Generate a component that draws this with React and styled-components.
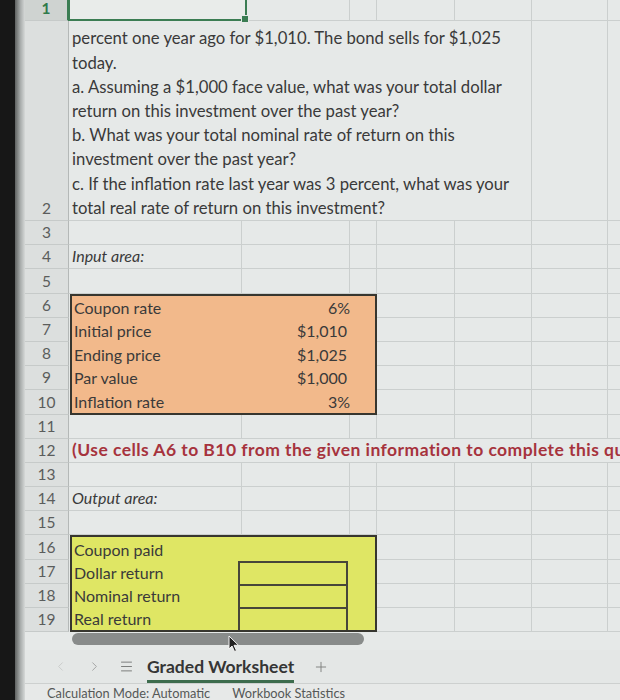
import React from 'react';
import styled, { createGlobalStyle, css } from 'styled-components';
import { ChevronLeft, ChevronRight, Menu, Plus } from 'lucide-react';

const ROW_H = 24.2;
const GRID = '#cbcfce';
const INK = '#3a3a3a';

const Global = createGlobalStyle`
  html, body { margin: 0; padding: 0; width: 620px; height: 700px; overflow: hidden; background: #e6e9e8; }
  body { font-family: Lato, "Open Sans", "Liberation Sans", sans-serif; }
  #root { width: 620px; height: 700px; }
`;

const Screen = styled.div`
  display: flex;
  width: 620px;
  height: 700px;
  overflow: hidden;
`;

const DarkEdge = styled.div`
  flex: none;
  width: 15px;
  background: #171717;
`;

const Bezel = styled.div`
  flex: none;
  width: 10px;
  background: linear-gradient(to right, #5e6160, #a9adac 55%, #d6d9d8);
`;

const Main = styled.div`
  flex: 1;
  min-width: 0;
  display: flex;
  flex-direction: column;
  overflow: hidden;
  position: relative;
`;

const Sheet = styled.div`
  display: grid;
  grid-template-columns: 44px 173px 108px 27px 78px 77px 76px 80px;
  grid-template-rows: 21px 200px repeat(17, ${ROW_H}px);
  background: #e6e9e8;
  width: 663px;
`;

const RowHead = styled.div`
  grid-column: 1;
  grid-row: ${(p) => p.$row};
  display: flex;
  align-items: flex-end;
  justify-content: center;
  padding-bottom: 2px;
  background: #dcdfde;
  border-bottom: 1px solid #c6cac9;
  border-right: 1px solid #b4b8b7;
  font-size: 15.5px;
  line-height: 20px;
  color: #5b5d5c;
  ${(p) =>
    p.$selected &&
    css`
      background: #cfd3d1;
      color: #2f7a4b;
      font-weight: 700;
      border-right: 2px solid #3b7d53;
    `}
`;

const Cell = styled.div`
  grid-row: ${(p) => p.$row};
  grid-column: ${(p) => p.$col} / span ${(p) => p.$span || 1};
  min-width: 0;
  display: flex;
  align-items: flex-end;
  padding: 0 3px 1px;
  border-right: 1px solid ${GRID};
  border-bottom: 1px solid ${GRID};
  font-size: 16px;
  line-height: 22px;
  color: ${INK};
  white-space: nowrap;
  overflow: hidden;
  ${(p) => p.$italic && css`font-style: italic;`}
  ${(p) =>
    p.$note &&
    css`
      font-size: 17.5px;
      letter-spacing: 0.45px;
      font-weight: 700;
      color: #a6333d;
      border-right: none;
    `}
`;

const SelectedCell = styled.div`
  grid-row: 1;
  grid-column: 2;
  position: relative;
  border: 2px solid #3b7d53;
  border-top: none;
  margin-left: -1px;
  margin-right: -5px;
  background: #e9ecea;
`;

const FillHandle = styled.span`
  position: absolute;
  right: -4px;
  bottom: -4px;
  width: 6px;
  height: 6px;
  background: #3b7d53;
  border: 1px solid #e6e9e8;
`;

const QuestionCell = styled.div`
  grid-row: 2;
  grid-column: 2 / span 5;
  display: flex;
  flex-direction: column;
  justify-content: flex-end;
  padding: 0 3px 0;
  border-right: 1px solid ${GRID};
  border-bottom: 1px solid ${GRID};
  font-size: 16.7px;
  line-height: 24.2px;
  color: ${INK};
  white-space: nowrap;
`;

const QLine = styled.div``;

const DataBox = styled.div`
  grid-row: ${(p) => p.$row} / span ${(p) => p.$rows};
  grid-column: 2 / span 3;
  background: ${(p) => p.$fill};
  border: 2px solid #37362f;
  margin-left: 1px;
  display: grid;
  grid-template-columns: 170px 108px 1fr;
  grid-template-rows: repeat(${(p) => p.$rows}, 1fr);
  font-size: 16px;
  color: ${INK};
`;

const BoxLabel = styled.div`
  grid-column: 1;
  display: flex;
  align-items: flex-end;
  padding: 0 2px 0;
  line-height: 22px;
  white-space: nowrap;
`;

const BoxValue = styled.div`
  grid-column: 2;
  display: flex;
  align-items: flex-end;
  justify-content: flex-end;
  padding-right: ${(p) => (p.$pct ? '0px' : '3px')};
  line-height: 22px;
  white-space: nowrap;
`;

const OutputSlot = styled.div`
  grid-column: 2;
  margin-left: -4px;
  margin-right: 2px;
  border: 2px solid #47463a;
  border-bottom: none;
`;

const ScrollArea = styled.div`
  flex: none;
  height: 18px;
  display: flex;
  align-items: flex-start;
  padding-left: 47px;
  background: #e6e9e8;
  position: relative;
`;

const ScrollPill = styled.div`
  width: 292px;
  height: 12px;
  margin-top: 1px;
  border-radius: 6px;
  background: #898c8b;
`;

const Pointer = styled.svg`
  position: absolute;
  left: 203px;
  top: 3px;
  z-index: 2;
`;

const TabBar = styled.div`
  flex: none;
  height: 33px;
  display: flex;
  align-items: stretch;
  background: #e4e7e6;
  padding-left: 18px;
`;

const NavButton = styled.div`
  display: flex;
  align-items: center;
  justify-content: center;
  width: ${(p) => p.$w || 34}px;
  color: ${(p) => p.$color || '#8a8c8b'};
`;

const Tab = styled.div`
  display: flex;
  align-items: center;
  margin-left: 6px;
  padding: 2px 0 0;
  border-bottom: 3px solid #3d6c4d;
  font-size: 17.5px;
  font-weight: 700;
  color: #353535;
  white-space: nowrap;
`;

const AddTab = styled(NavButton)`
  margin-left: 18px;
  width: 18px;
`;

const StatusBar = styled.div`
  flex: none;
  height: 17px;
  display: flex;
  align-items: flex-start;
  gap: 22px;
  padding: 2px 0 0 22px;
  border-top: 1px solid #cdd0cf;
  background: #e7e9e8;
  font-size: 12.8px;
  line-height: 15px;
  color: #555857;
  white-space: nowrap;
`;

const inputs = [
  ['Coupon rate', '6%', true],
  ['Initial price', '$1,010', false],
  ['Ending price', '$1,025', false],
  ['Par value', '$1,000', false],
  ['Inflation rate', '3%', true],
];

const outputs = ['Coupon paid', 'Dollar return', 'Nominal return', 'Real return'];

const question = [
  'percent one year ago for $1,010. The bond sells for $1,025',
  'today.',
  'a. Assuming a $1,000 face value, what was your total dollar',
  'return on this investment over the past year?',
  'b. What was your total nominal rate of return on this',
  'investment over the past year?',
  'c. If the inflation rate last year was 3 percent, what was your',
  'total real rate of return on this investment?',
];

const textRows = {
  4: { text: 'Input area:', italic: true },
  12: { text: '(Use cells A6 to B10 from the given information to complete this question.)', note: true },
  14: { text: 'Output area:', italic: true },
};

function plainCells(row, fromCol) {
  const cells = [];
  for (let c = fromCol; c <= 8; c += 1) {
    cells.push(<Cell key={`${row}-${c}`} $row={row} $col={c} />);
  }
  return cells;
}

export default function App() {
  const rows = [];

  rows.push(<RowHead key="h1" $row={1} $selected>1</RowHead>);
  rows.push(
    <SelectedCell key="sel">
      <FillHandle />
    </SelectedCell>
  );
  rows.push(...plainCells(1, 3));

  rows.push(<RowHead key="h2" $row={2}>2</RowHead>);
  rows.push(
    <QuestionCell key="q">
      {question.map((l) => (
        <QLine key={l}>{l}</QLine>
      ))}
    </QuestionCell>
  );
  rows.push(...plainCells(2, 7));

  for (let r = 3; r <= 19; r += 1) {
    rows.push(<RowHead key={`h${r}`} $row={r}>{r}</RowHead>);
    const inBox = (r >= 6 && r <= 10) || (r >= 16 && r <= 19);
    if (inBox) {
      rows.push(...plainCells(r, 5));
    } else if (textRows[r]) {
      const t = textRows[r];
      if (t.note) {
        rows.push(
          <Cell key={`t${r}`} $row={r} $col={2} $span={7} $note>
            {t.text}
          </Cell>
        );
      } else {
        rows.push(
          <Cell key={`t${r}`} $row={r} $col={2} $italic>
            {t.text}
          </Cell>
        );
        rows.push(...plainCells(r, 3));
      }
    } else {
      rows.push(...plainCells(r, 2));
    }
  }

  return (
    <>
      <Global />
      <Screen>
        <DarkEdge />
        <Bezel />
        <Main>
          <Sheet>
            {rows}
            <DataBox $row={6} $rows={5} $fill="#f2b98b">
              {inputs.map(([label, value, pct], i) => (
                <React.Fragment key={label}>
                  <BoxLabel style={{ gridRow: i + 1 }}>{label}</BoxLabel>
                  <BoxValue style={{ gridRow: i + 1 }} $pct={pct}>
                    {value}
                  </BoxValue>
                </React.Fragment>
              ))}
            </DataBox>
            <DataBox $row={16} $rows={4} $fill="#dfe664">
              {outputs.map((label, i) => (
                <React.Fragment key={label}>
                  <BoxLabel style={{ gridRow: i + 1 }}>{label}</BoxLabel>
                  {i > 0 && <OutputSlot style={{ gridRow: i + 1 }} />}
                </React.Fragment>
              ))}
            </DataBox>
          </Sheet>
          <ScrollArea>
            <ScrollPill />
            <Pointer width="12" height="18" viewBox="0 0 12 18">
              <path d="M1 1 L1 14 L4 11 L6.5 16.5 L8.5 15.6 L6 10.3 L10.5 10.3 Z" fill="#222" stroke="#f2f2f2" strokeWidth="1" strokeLinejoin="round" />
            </Pointer>
          </ScrollArea>
          <TabBar>
            <NavButton $color="#c6c8c7">
              <ChevronLeft size={15} strokeWidth={1.4} />
            </NavButton>
            <NavButton $color="#9a9c9b">
              <ChevronRight size={15} strokeWidth={1.4} />
            </NavButton>
            <NavButton $color="#6e706f" $w={30}>
              <Menu size={15} strokeWidth={1.4} />
            </NavButton>
            <Tab>Graded Worksheet</Tab>
            <AddTab $color="#7d7f7e">
              <Plus size={16} strokeWidth={1.4} />
            </AddTab>
          </TabBar>
          <StatusBar>
            <span>Calculation Mode: Automatic</span>
            <span>Workbook Statistics</span>
          </StatusBar>
        </Main>
      </Screen>
    </>
  );
}
